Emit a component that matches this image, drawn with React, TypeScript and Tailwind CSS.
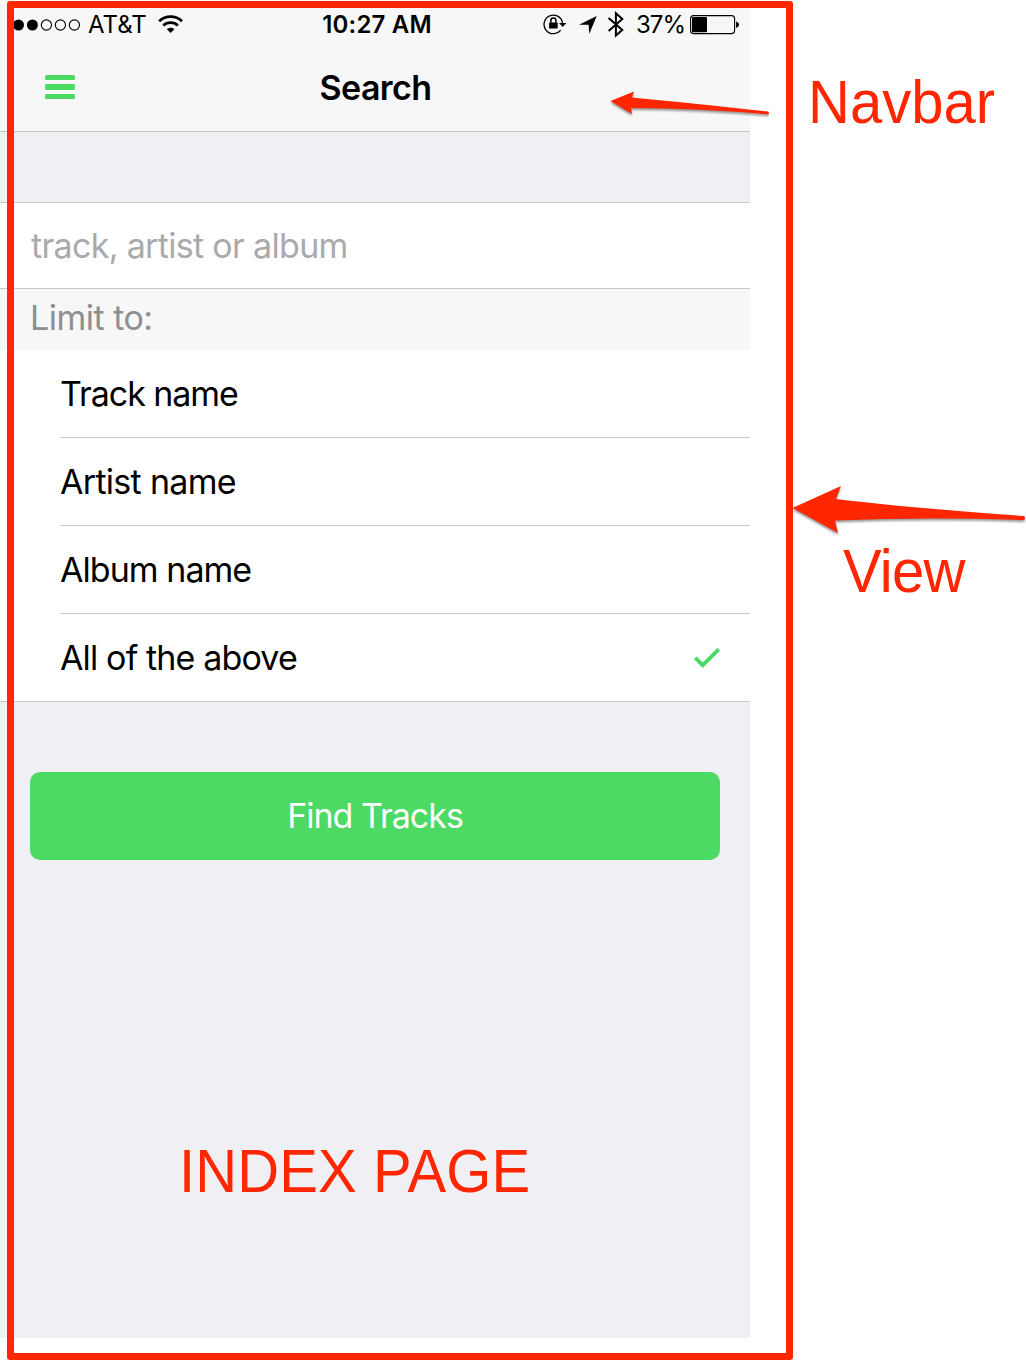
const options = [
  { label: 'Track name', tracking: 'tracking-[-1.05px]', checked: false },
  { label: 'Artist name', tracking: 'tracking-[-0.7px]', checked: false },
  { label: 'Album name', tracking: 'tracking-[-0.95px]', checked: false },
  { label: 'All of the above', tracking: 'tracking-[-0.85px]', checked: true },
];

function Signal() {
  return (
    <svg className="mb-px h-[14px] w-[68px]" viewBox="0 0 68 14">
      <circle cx="5.5" cy="7" r="5.5" />
      <circle cx="19.4" cy="7" r="5.5" />
      <g fill="none" stroke="#000" strokeWidth="1.1">
        <circle cx="33.4" cy="7" r="5.1" />
        <circle cx="47.4" cy="7" r="5.1" />
        <circle cx="61.4" cy="7" r="5.1" />
      </g>
    </svg>
  );
}

function Wifi() {
  return (
    <svg className="mb-[2px] h-[18px] w-[26px]" viewBox="0 0 26 18" fill="none" stroke="#000" strokeWidth="2.7">
      <path d="M1.2 6.2C7.6 .1 17.6 .1 24 6.2" />
      <path d="M5.3 10.5C9.4 6.7 15.8 6.7 19.9 10.5" />
      <path d="M12.6 18L8.9 14.2C10.9 12.2 14.3 12.2 16.3 14.2Z" fill="#000" stroke="none" />
    </svg>
  );
}

function RotationLock() {
  return (
    <svg className="mb-[2px] h-[22px] w-[24px]" viewBox="0 0 24 22" fill="none" stroke="#000">
      <path d="M17.6 17.2A9.3 9.3 0 1 1 19.5 9.8" strokeWidth="1.3" />
      <path d="M16 10H23.4L19.7 14Z" fill="#000" stroke="none" />
      <rect x="6.1" y="9.6" width="8.6" height="6" rx=".7" fill="#000" stroke="none" />
      <path d="M7.9 9.8V7.4a2.5 2.5 0 0 1 5 0V9.8" strokeWidth="1.5" />
    </svg>
  );
}

function Battery() {
  return (
    <svg className="h-[20px] w-[50px]" viewBox="0 0 50 20">
      <rect x=".6" y=".6" width="44" height="18" rx="3" fill="none" stroke="#000" strokeWidth="1.1" />
      <rect x="2" y="2" width="15" height="15.2" rx="1" />
      <path d="M46 6.5C48.2 7.3 49 8.3 49 9.7C49 11.1 48.2 12.1 46 12.9Z" />
    </svg>
  );
}

function StatusBar() {
  return (
    <div className="grid h-[42px] grid-cols-3 items-center text-[24px] leading-[42px]">
      <div className="flex items-center pl-[13px]">
        <Signal />
        <span className="ml-[7px] w-[59px]">AT&amp;T</span>
        <span className="ml-[11px]"><Wifi /></span>
      </div>
      <div className="pl-1 text-center font-semibold tracking-[0.2px]">10:27 AM</div>
      <div className="flex items-center justify-end pr-[10px]">
        <RotationLock />
        <svg className="mb-px ml-[12px] h-[18px] w-[18px]" viewBox="0 0 18 18">
          <path d="M0 8.7L17.7 0L10.3 17.8L9.6 8.7Z" />
        </svg>
        <svg className="mb-[2px] ml-[10px] h-[27px] w-[17px]" viewBox="0 0 17 27" fill="none" stroke="#000" strokeWidth="2">
          <path d="M1.6 6.9L15.3 18.9L8.9 24.6V2.2L15.3 7.9L1.6 19.9" />
        </svg>
        <span className="ml-[12px] w-[49px] tracking-[-1px]">37%</span>
        <span className="ml-[5px]"><Battery /></span>
      </div>
    </div>
  );
}

function Phone() {
  return (
    <div className="mt-[4px] flex h-[1334px] w-[750px] flex-col bg-[#efeff4]">
      <header className="h-[128px] border-b border-[#c4c4c6] bg-[#f7f7f7]">
        <StatusBar />
        <div className="grid h-[83px] grid-cols-[1fr_auto_1fr] items-center pl-[45px]">
          <div className="flex w-[30px] flex-col gap-[4.5px] pb-px">
            <div className="h-[5.3px] rounded-[1.5px] bg-[#4cd964]" />
            <div className="h-[5.3px] rounded-[1.5px] bg-[#4cd964]" />
            <div className="h-[5.3px] rounded-[1.5px] bg-[#4cd964]" />
          </div>
          <h1 className="-translate-x-[22px] text-[34px] font-semibold leading-[40px] tracking-[-0.6px]">Search</h1>
        </div>
      </header>
      <main className="pt-[70px]">
        <div className="flex h-[87px] items-center border-y border-[#c8c7cc] bg-white pl-[31px]">
          <span className="text-[34px] tracking-[-0.68px] text-[#aaa]">track, artist or album</span>
        </div>
        <div className="flex h-[61px] items-center bg-[#f7f7f7] pl-[30px] pb-[4px]">
          <span className="text-[34px] tracking-[-0.5px] text-[#8e8e93]">Limit to:</span>
        </div>
        <ul className="border-b border-[#c8c7cc] bg-white pl-[60px]">
          {options.map((option) => (
            <li
              key={option.label}
              className="flex h-[88px] items-center justify-between border-b border-[#c8c7cc] pr-[30px] last:h-[87px] last:border-b-0"
            >
              <span className={`text-[34px] ${option.tracking}`}>{option.label}</span>
              {option.checked && (
                <svg className="h-[20px] w-[26px]" viewBox="0 0 26 20" fill="none" stroke="#4cd964" strokeWidth="3.8">
                  <path d="M1.3 9.8L8.7 17.2L24.7 1.3" />
                </svg>
              )}
            </li>
          ))}
        </ul>
        <div className="px-[30px] pt-[70px]">
          <button className="flex h-[88px] w-full items-center justify-center rounded-[10px] bg-[#4cd964] pb-px text-[34px] tracking-[-1px] text-white">
            Find Tracks
          </button>
        </div>
      </main>
    </div>
  );
}

function Annotations() {
  return (
    <div className="absolute inset-0 font-['Liberation_Sans',sans-serif] text-[58px] leading-[58px] whitespace-nowrap text-[#ff2600]">
      <div className="absolute left-[7px] top-[1px] h-[1359px] w-[786px] rounded-[3px] border-[7px] border-[#ff2600]" />
      <svg className="absolute inset-0 h-[1360px] w-[1026px] drop-shadow-[0_2px_1px_rgba(0,0,0,0.4)]" viewBox="0 0 1026 1360" fill="#ff2600">
        <path d="M610.5 101L634 91.5L632 97.5Q690 103 768 111.5Q770 113 768 114.5Q700 108 631 108L632 114Z" />
        <path d="M792.5 508L841 486L836 499Q910 508 1024 516Q1026 518 1024 520Q925 517 835 520.5L838 533Z" />
      </svg>
      <span className="absolute left-[808px] top-[73px] scale-y-[1.04]">Navbar</span>
      <span className="absolute left-[843px] top-[542px] scale-y-[1.04] tracking-[-0.8px]">View</span>
      <span className="absolute left-[179px] top-[1142px] scale-y-[1.04] tracking-[0.1px]">INDEX PAGE</span>
    </div>
  );
}

export default function App() {
  return (
    <div className="relative flex h-[1360px] w-[1026px] flex-col overflow-hidden bg-white font-['Inter',sans-serif] text-black">
      <Phone />
      <Annotations />
    </div>
  );
}
